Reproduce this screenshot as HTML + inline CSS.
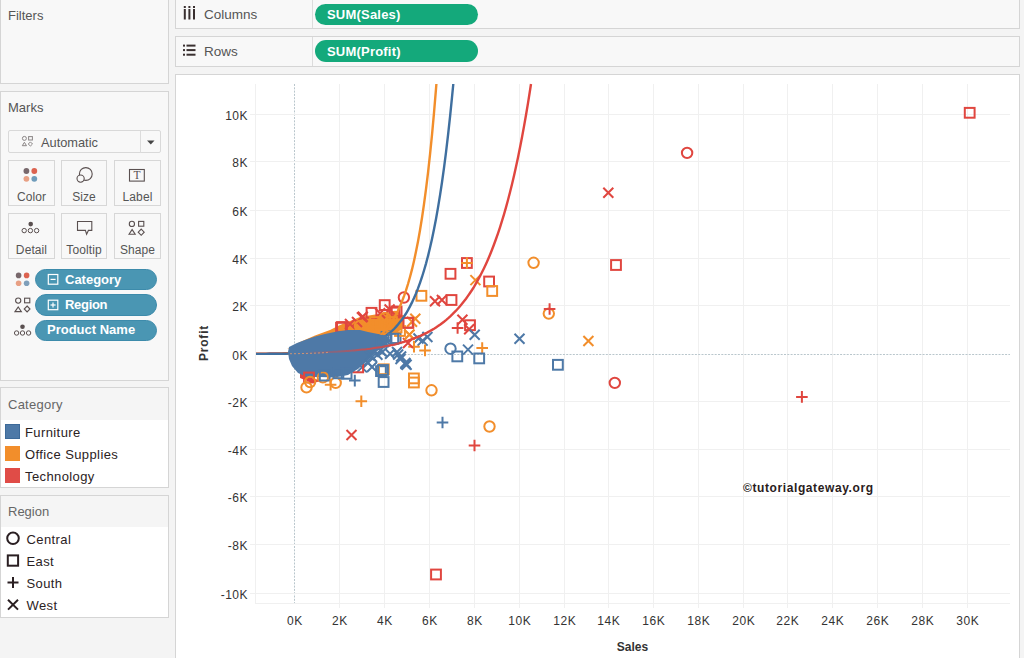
<!DOCTYPE html>
<html><head><meta charset="utf-8">
<style>
*{margin:0;padding:0;box-sizing:border-box}
html,body{width:1024px;height:658px;overflow:hidden;background:#f4f4f4;font-family:"Liberation Sans",sans-serif;position:relative}
.p{position:absolute;background:#f8f8f8;border:1px solid #d5d5d5}
.t{position:absolute;white-space:nowrap;line-height:15px}
.ax{font-family:"Liberation Sans",sans-serif;font-size:12px;fill:#333;letter-spacing:0.5px}
.at{font-family:"Liberation Sans",sans-serif;font-size:12px;font-weight:bold;fill:#333}
.wm{font-family:"Liberation Sans",sans-serif;font-size:12px;font-weight:bold;fill:#2a1c1c;letter-spacing:0.6px}
.pill{position:absolute;border-radius:11px;color:#fff;font-weight:bold;font-size:13px;white-space:nowrap;line-height:15px}
.btn{position:absolute;width:46px;height:46px;border:1px solid #d7d7d7;background:#f8f8f8}
.btn span{position:absolute;left:0;right:0;top:28.5px;text-align:center;font-size:12px;letter-spacing:0.1px;color:#555;line-height:15px}
.lg{font-size:13px;color:#2b2223;letter-spacing:0.4px}
</style></head><body>
<div class="p" style="left:0;top:-1px;width:169px;height:85px"></div>
<div class="t" style="left:8px;top:8px;font-size:13px;color:#555">Filters</div>
<div class="p" style="left:0;top:91px;width:169px;height:290px"></div>
<div class="t" style="left:8px;top:100px;font-size:13px;color:#555">Marks</div>
<div class="p" style="left:8px;top:130px;width:153px;height:23px;background:#f8f8f8;border-color:#d9d9d9;border-radius:2px"></div>
<div class="t" style="left:41px;top:134.5px;font-size:12.8px;color:#555">Automatic</div>
<div class="btn" style="left:8px;top:160px;width:47px"><span>Color</span></div>
<div class="btn" style="left:61px;top:160px"><span>Size</span></div>
<div class="btn" style="left:114px;top:160px;width:47px"><span>Label</span></div>
<div class="btn" style="left:8px;top:213px;width:47px"><span>Detail</span></div>
<div class="btn" style="left:61px;top:213px"><span>Tooltip</span></div>
<div class="btn" style="left:114px;top:213px;width:47px"><span>Shape</span></div>
<div class="pill" style="left:35px;top:269px;width:122px;height:21px;background:#4a96b3;border:1px solid #3d8bab;padding:1.5px 0 0 29px">Category</div>
<div class="pill" style="left:35px;top:294px;width:122px;height:22px;background:#4a96b3;border:1px solid #3d8bab;padding:1.5px 0 0 29px;letter-spacing:-0.3px">Region</div>
<div class="pill" style="left:35px;top:319.5px;width:122px;height:21px;background:#4a96b3;border:1px solid #3d8bab;padding:1.5px 0 0 11px">Product Name</div>

<div class="p" style="left:0;top:387px;width:169px;height:101px;background:#fff"></div>
<div style="position:absolute;left:1px;top:388px;width:167px;height:32px;background:#f5f5f5"></div>
<div class="t" style="left:8px;top:397px;font-size:13px;color:#666;letter-spacing:0.25px">Category</div>
<div style="position:absolute;left:5px;top:424px;width:15px;height:15px;background:#4e79a7;border:1px solid #3d6a99"></div>
<div style="position:absolute;left:5px;top:446px;width:15px;height:15px;background:#f28e2b"></div>
<div style="position:absolute;left:5px;top:468px;width:15px;height:15px;background:#e04c47"></div>
<div class="t lg" style="left:25px;top:425px">Furniture</div>
<div class="t lg" style="left:25px;top:447px">Office Supplies</div>
<div class="t lg" style="left:25px;top:469px">Technology</div>

<div class="p" style="left:0;top:495px;width:169px;height:123px;background:#fff"></div>
<div style="position:absolute;left:1px;top:496px;width:167px;height:31px;background:#f5f5f5"></div>
<div class="t" style="left:8px;top:504px;font-size:13px;color:#666">Region</div>
<div class="t lg" style="left:26.5px;top:532px">Central</div>
<div class="t lg" style="left:26.5px;top:554px">East</div>
<div class="t lg" style="left:26.5px;top:576px">South</div>
<div class="t lg" style="left:26.5px;top:598px">West</div>

<div class="p" style="left:175px;top:-1px;width:845px;height:30px"></div>
<div style="position:absolute;left:312px;top:0;width:1px;height:28px;background:#dcdcdc"></div>
<div class="t" style="left:204px;top:7px;font-size:13.5px;color:#555">Columns</div>
<div class="pill" style="left:315px;top:4px;width:163px;height:21px;background:#14a97b;padding:2.5px 0 0 12px;letter-spacing:0.2px">SUM(Sales)</div>
<div class="p" style="left:175px;top:36px;width:845px;height:31px"></div>
<div style="position:absolute;left:312px;top:37px;width:1px;height:29px;background:#dcdcdc"></div>
<div class="t" style="left:204px;top:44px;font-size:13.5px;color:#555">Rows</div>
<div class="pill" style="left:315px;top:40px;width:163px;height:22px;background:#14a97b;padding:3.5px 0 0 12px;letter-spacing:0.2px">SUM(Profit)</div>

<div class="p" style="left:175px;top:74px;width:845px;height:600px;background:#fff"></div>
<svg style="position:absolute;left:0;top:0" width="1024" height="658" viewBox="0 0 1024 658">
<line x1="294.5" y1="84" x2="294.5" y2="603" stroke="#b9c6cc" stroke-width="1" stroke-dasharray="2 1.3"/>
<line x1="339.5" y1="84" x2="339.5" y2="608" stroke="#f0f0f0" stroke-width="1"/>
<line x1="384.5" y1="84" x2="384.5" y2="608" stroke="#f0f0f0" stroke-width="1"/>
<line x1="429.5" y1="84" x2="429.5" y2="608" stroke="#f0f0f0" stroke-width="1"/>
<line x1="474.5" y1="84" x2="474.5" y2="608" stroke="#f0f0f0" stroke-width="1"/>
<line x1="519.5" y1="84" x2="519.5" y2="608" stroke="#f0f0f0" stroke-width="1"/>
<line x1="564.5" y1="84" x2="564.5" y2="608" stroke="#f0f0f0" stroke-width="1"/>
<line x1="608.5" y1="84" x2="608.5" y2="608" stroke="#f0f0f0" stroke-width="1"/>
<line x1="653.5" y1="84" x2="653.5" y2="608" stroke="#f0f0f0" stroke-width="1"/>
<line x1="698.5" y1="84" x2="698.5" y2="608" stroke="#f0f0f0" stroke-width="1"/>
<line x1="743.5" y1="84" x2="743.5" y2="608" stroke="#f0f0f0" stroke-width="1"/>
<line x1="787.5" y1="84" x2="787.5" y2="608" stroke="#f0f0f0" stroke-width="1"/>
<line x1="832.5" y1="84" x2="832.5" y2="608" stroke="#f0f0f0" stroke-width="1"/>
<line x1="877.5" y1="84" x2="877.5" y2="608" stroke="#f0f0f0" stroke-width="1"/>
<line x1="922.5" y1="84" x2="922.5" y2="608" stroke="#f0f0f0" stroke-width="1"/>
<line x1="967.5" y1="84" x2="967.5" y2="608" stroke="#f0f0f0" stroke-width="1"/>
<line x1="255.5" y1="84" x2="255.5" y2="603" stroke="#f0f0f0" stroke-width="1"/>
<line x1="250" y1="114.5" x2="1010" y2="114.5" stroke="#f0f0f0" stroke-width="1"/>
<line x1="250" y1="161.5" x2="1010" y2="161.5" stroke="#f0f0f0" stroke-width="1"/>
<line x1="250" y1="210.5" x2="1010" y2="210.5" stroke="#f0f0f0" stroke-width="1"/>
<line x1="250" y1="258.5" x2="1010" y2="258.5" stroke="#f0f0f0" stroke-width="1"/>
<line x1="250" y1="305.5" x2="1010" y2="305.5" stroke="#f0f0f0" stroke-width="1"/>
<line x1="256" y1="354.5" x2="1010" y2="354.5" stroke="#b9c6cc" stroke-width="1" stroke-dasharray="2 1.3"/>
<line x1="250" y1="401.5" x2="1010" y2="401.5" stroke="#f0f0f0" stroke-width="1"/>
<line x1="250" y1="449.5" x2="1010" y2="449.5" stroke="#f0f0f0" stroke-width="1"/>
<line x1="250" y1="496.5" x2="1010" y2="496.5" stroke="#f0f0f0" stroke-width="1"/>
<line x1="250" y1="544.5" x2="1010" y2="544.5" stroke="#f0f0f0" stroke-width="1"/>
<line x1="250" y1="593.5" x2="1010" y2="593.5" stroke="#f0f0f0" stroke-width="1"/>
<line x1="255" y1="603.5" x2="1010" y2="603.5" stroke="#f0f0f0" stroke-width="1"/>
<text x="248" y="120.0" text-anchor="end" class="ax">10K</text>
<text x="248" y="167.0" text-anchor="end" class="ax">8K</text>
<text x="248" y="216.0" text-anchor="end" class="ax">6K</text>
<text x="248" y="264.0" text-anchor="end" class="ax">4K</text>
<text x="248" y="311.0" text-anchor="end" class="ax">2K</text>
<text x="248" y="360.0" text-anchor="end" class="ax">0K</text>
<text x="248" y="407.0" text-anchor="end" class="ax">-2K</text>
<text x="248" y="455.0" text-anchor="end" class="ax">-4K</text>
<text x="248" y="502.0" text-anchor="end" class="ax">-6K</text>
<text x="248" y="550.0" text-anchor="end" class="ax">-8K</text>
<text x="248" y="599.0" text-anchor="end" class="ax">-10K</text>
<text x="294.8" y="625" text-anchor="middle" class="ax">0K</text>
<text x="339.8" y="625" text-anchor="middle" class="ax">2K</text>
<text x="384.8" y="625" text-anchor="middle" class="ax">4K</text>
<text x="429.8" y="625" text-anchor="middle" class="ax">6K</text>
<text x="474.8" y="625" text-anchor="middle" class="ax">8K</text>
<text x="519.8" y="625" text-anchor="middle" class="ax">10K</text>
<text x="564.8" y="625" text-anchor="middle" class="ax">12K</text>
<text x="608.8" y="625" text-anchor="middle" class="ax">14K</text>
<text x="653.8" y="625" text-anchor="middle" class="ax">16K</text>
<text x="698.8" y="625" text-anchor="middle" class="ax">18K</text>
<text x="743.8" y="625" text-anchor="middle" class="ax">20K</text>
<text x="787.8" y="625" text-anchor="middle" class="ax">22K</text>
<text x="832.8" y="625" text-anchor="middle" class="ax">24K</text>
<text x="877.8" y="625" text-anchor="middle" class="ax">26K</text>
<text x="922.8" y="625" text-anchor="middle" class="ax">28K</text>
<text x="967.8" y="625" text-anchor="middle" class="ax">30K</text>
<text x="632.5" y="651" text-anchor="middle" class="at">Sales</text>
<text transform="translate(208.3 343) rotate(-90)" text-anchor="middle" class="at" style="letter-spacing:0.8px">Profit</text>
<text x="743" y="491.7" class="wm">©tutorialgateway.org</text>
<polygon points="287,349 300,342 315,335.5 330,330 340,325 350,321 360,317 372,315 385,313 395,311 403,317 401,330 390,336 375,338 360,334 345,333 320,337 300,345" fill="#f28e2b"/><polygon points="300,372 312,378 322,381 312,383 300,378" fill="#e0463f"/>
<rect x="964.8" y="107.9" width="9.8" height="9.8" fill="none" stroke="#e0463f" stroke-width="2.0"/>
<circle cx="687.1" cy="152.9" r="5.2" fill="none" stroke="#e0463f" stroke-width="2.0"/>
<path d="M603.3 187.7L613.3 197.7M613.3 187.7L603.3 197.7" stroke="#e0463f" stroke-width="2.0"/>
<circle cx="533.6" cy="262.8" r="5.2" fill="none" stroke="#f28e2b" stroke-width="2.0"/>
<rect x="611.1" y="260.1" width="9.8" height="9.8" fill="none" stroke="#e0463f" stroke-width="2.0"/>
<circle cx="548.8" cy="313.6" r="5.2" fill="none" stroke="#f28e2b" stroke-width="2.0"/>
<path d="M543.8 309.0H555.4M549.6 303.2V314.8" stroke="#e0463f" stroke-width="2.0"/>
<path d="M514.5 333.8L524.5 343.8M524.5 333.8L514.5 343.8" stroke="#4e79a7" stroke-width="2.0"/>
<path d="M583.4 336.0L593.4 346.0M593.4 336.0L583.4 346.0" stroke="#f28e2b" stroke-width="2.0"/>
<rect x="553.0" y="359.9" width="9.8" height="9.8" fill="none" stroke="#4e79a7" stroke-width="2.0"/>
<circle cx="614.8" cy="382.9" r="5.2" fill="none" stroke="#e0463f" stroke-width="2.0"/>
<path d="M796.1 396.9H807.7M801.9 391.1V402.7" stroke="#e0463f" stroke-width="2.0"/>
<rect x="462.0" y="258.1" width="9.8" height="9.8" fill="none" stroke="#e0463f" stroke-width="2.0"/>
<path d="M461.1 263.0H472.7M466.9 257.2V268.8" stroke="#f28e2b" stroke-width="2.0"/>
<rect x="445.6" y="268.9" width="9.8" height="9.8" fill="none" stroke="#e0463f" stroke-width="2.0"/>
<path d="M470.4 275.1L480.4 285.1M480.4 275.1L470.4 285.1" stroke="#f28e2b" stroke-width="2.0"/>
<rect x="484.2" y="276.6" width="9.8" height="9.8" fill="none" stroke="#e0463f" stroke-width="2.0"/>
<rect x="487.3" y="286.1" width="9.8" height="9.8" fill="none" stroke="#f28e2b" stroke-width="2.0"/>
<circle cx="403.9" cy="297.5" r="5.2" fill="none" stroke="#e0463f" stroke-width="2.0"/>
<rect x="416.5" y="290.9" width="9.8" height="9.8" fill="none" stroke="#f28e2b" stroke-width="2.0"/>
<path d="M430.0 296.3L440.0 306.3M440.0 296.3L430.0 306.3" stroke="#e0463f" stroke-width="2.0"/>
<path d="M436.9 295.0L446.9 305.0M446.9 295.0L436.9 305.0" stroke="#e0463f" stroke-width="2.0"/>
<rect x="446.6" y="295.1" width="9.8" height="9.8" fill="none" stroke="#e0463f" stroke-width="2.0"/>
<path d="M410.3 313.8L420.3 323.8M420.3 313.8L410.3 323.8" stroke="#f28e2b" stroke-width="2.0"/>
<rect x="403.5" y="317.9" width="9.8" height="9.8" fill="none" stroke="#e0463f" stroke-width="2.0"/>
<path d="M457.4 314.8L467.4 324.8M467.4 314.8L457.4 324.8" stroke="#e0463f" stroke-width="2.0"/>
<rect x="465.1" y="320.3" width="9.8" height="9.8" fill="none" stroke="#e0463f" stroke-width="2.0"/>
<path d="M451.8 328.0H463.4M457.6 322.2V333.8" stroke="#e0463f" stroke-width="2.0"/>
<path d="M464.2 324.3L474.2 334.3M474.2 324.3L464.2 334.3" stroke="#e0463f" stroke-width="2.0"/>
<path d="M469.7 329.8L479.7 339.8M479.7 329.8L469.7 339.8" stroke="#4e79a7" stroke-width="2.0"/>
<path d="M476.4 348.0H488.0M482.2 342.2V353.8" stroke="#f28e2b" stroke-width="2.0"/>
<circle cx="450.5" cy="348.7" r="5.2" fill="none" stroke="#4e79a7" stroke-width="2.0"/>
<path d="M463.0 344.6L473.0 354.6M473.0 344.6L463.0 354.6" stroke="#4e79a7" stroke-width="2.0"/>
<rect x="452.4" y="351.5" width="9.8" height="9.8" fill="none" stroke="#4e79a7" stroke-width="2.0"/>
<rect x="474.3" y="353.5" width="9.8" height="9.8" fill="none" stroke="#4e79a7" stroke-width="2.0"/>
<path d="M422.4 332.0L432.4 342.0M432.4 332.0L422.4 342.0" stroke="#4e79a7" stroke-width="2.0"/>
<path d="M417.6 335.6L427.6 345.6M427.6 335.6L417.6 345.6" stroke="#4e79a7" stroke-width="2.0"/>
<path d="M413.5 333.5L423.5 343.5M423.5 333.5L413.5 343.5" stroke="#4e79a7" stroke-width="2.0"/>
<path d="M404.5 329.6L414.5 339.6M414.5 329.6L404.5 339.6" stroke="#f28e2b" stroke-width="2.0"/>
<path d="M408.2 346.7H419.8M414.0 340.9V352.5" stroke="#f28e2b" stroke-width="2.0"/>
<path d="M419.2 350.4H430.8M425.0 344.6V356.2" stroke="#f28e2b" stroke-width="2.0"/>
<path d="M403.0 338.0L413.0 348.0M413.0 338.0L403.0 348.0" stroke="#e0463f" stroke-width="2.0"/>
<path d="M396.1 351.5L406.1 361.5M406.1 351.5L396.1 361.5" stroke="#4e79a7" stroke-width="2.0"/>
<path d="M401.6 359.7L411.6 369.7M411.6 359.7L401.6 369.7" stroke="#4e79a7" stroke-width="2.0"/>
<path d="M385.1 348.8L395.1 358.8M395.1 348.8L385.1 358.8" stroke="#4e79a7" stroke-width="2.0"/>
<path d="M372.4 349.7L382.4 359.7M382.4 349.7L372.4 359.7" stroke="#4e79a7" stroke-width="2.0"/>
<path d="M363.2 357.9L373.2 367.9M373.2 357.9L363.2 367.9" stroke="#4e79a7" stroke-width="2.0"/>
<path d="M356.9 362.4L366.9 372.4M366.9 362.4L356.9 372.4" stroke="#4e79a7" stroke-width="2.0"/>
<rect x="353.3" y="362.5" width="9.8" height="9.8" fill="none" stroke="#e0463f" stroke-width="2.0"/>
<rect x="376.1" y="366.2" width="9.8" height="9.8" fill="none" stroke="#4e79a7" stroke-width="2.0"/>
<rect x="378.9" y="364.4" width="9.8" height="9.8" fill="none" stroke="#f28e2b" stroke-width="2.0"/>
<rect x="390.7" y="333.3" width="9.8" height="9.8" fill="none" stroke="#4e79a7" stroke-width="2.0"/>
<rect x="381.6" y="331.5" width="9.8" height="9.8" fill="none" stroke="#4e79a7" stroke-width="2.0"/>
<rect x="370.6" y="335.1" width="9.8" height="9.8" fill="none" stroke="#4e79a7" stroke-width="2.0"/>
<path d="M407.0 316.8L417.0 326.8M417.0 316.8L407.0 326.8" stroke="#f28e2b" stroke-width="2.0"/>
<rect x="409.0" y="373.5" width="9.8" height="9.8" fill="none" stroke="#f28e2b" stroke-width="2.0"/>
<rect x="409.0" y="377.6" width="9.8" height="9.8" fill="none" stroke="#f28e2b" stroke-width="2.0"/>
<circle cx="431.5" cy="390.3" r="5.2" fill="none" stroke="#f28e2b" stroke-width="2.0"/>
<rect x="378.7" y="377.1" width="9.8" height="9.8" fill="none" stroke="#4e79a7" stroke-width="2.0"/>
<path d="M436.7 422.5H448.3M442.5 416.7V428.3" stroke="#4e79a7" stroke-width="2.0"/>
<circle cx="489.5" cy="426.5" r="5.2" fill="none" stroke="#f28e2b" stroke-width="2.0"/>
<path d="M468.7 445.5H480.3M474.5 439.7V451.3" stroke="#e0463f" stroke-width="2.0"/>
<path d="M346.5 430.0L356.5 440.0M356.5 430.0L346.5 440.0" stroke="#e0463f" stroke-width="2.0"/>
<path d="M355.5 401.3H367.1M361.3 395.5V407.1" stroke="#f28e2b" stroke-width="2.0"/>
<rect x="431.1" y="569.6" width="9.8" height="9.8" fill="none" stroke="#e0463f" stroke-width="2.0"/>
<rect x="393.1" y="316.1" width="9.8" height="9.8" fill="none" stroke="#f28e2b" stroke-width="2.0"/>
<rect x="395.1" y="326.1" width="9.8" height="9.8" fill="none" stroke="#f28e2b" stroke-width="2.0"/>
<rect x="387.1" y="322.1" width="9.8" height="9.8" fill="none" stroke="#f28e2b" stroke-width="2.0"/>
<circle cx="395.0" cy="317.0" r="5.2" fill="none" stroke="#f28e2b" stroke-width="2.0"/>
<path d="M383.0 317.0L393.0 327.0M393.0 317.0L383.0 327.0" stroke="#f28e2b" stroke-width="2.0"/>
<rect x="375.1" y="320.1" width="9.8" height="9.8" fill="none" stroke="#f28e2b" stroke-width="2.0"/>
<rect x="336.1" y="322.8" width="9.8" height="9.8" fill="none" stroke="#e0463f" stroke-width="2.0"/>
<rect x="403.0" y="317.9" width="9.8" height="9.8" fill="none" stroke="#e0463f" stroke-width="2.0"/>
<path d="M384.6 304.5L394.6 314.5M394.6 304.5L384.6 314.5" stroke="#e0463f" stroke-width="2.0"/>
<path d="M357.8 311.8L367.8 321.8M367.8 311.8L357.8 321.8" stroke="#e0463f" stroke-width="2.0"/>
<rect x="389.6" y="307.6" width="9.8" height="9.8" fill="none" stroke="#e0463f" stroke-width="2.0"/>
<rect x="379.8" y="300.2" width="9.8" height="9.8" fill="none" stroke="#e0463f" stroke-width="2.0"/>
<rect x="366.6" y="307.9" width="9.8" height="9.8" fill="none" stroke="#e0463f" stroke-width="2.0"/>
<path d="M375.1 308.3L385.1 318.3M385.1 308.3L375.1 318.3" stroke="#e0463f" stroke-width="2.0"/>
<rect x="391.7" y="306.6" width="9.8" height="9.8" fill="none" stroke="#e0463f" stroke-width="2.0"/>
<path d="M356.9 312.4L366.9 322.4M366.9 312.4L356.9 322.4" stroke="#e0463f" stroke-width="2.0"/>
<path d="M352.0 317.0L362.0 327.0M362.0 317.0L352.0 327.0" stroke="#e0463f" stroke-width="2.0"/>
<rect x="391.7" y="322.5" width="9.8" height="9.8" fill="none" stroke="#f28e2b" stroke-width="2.0"/>
<path d="M404.3 329.7L414.3 339.7M414.3 329.7L404.3 339.7" stroke="#f28e2b" stroke-width="2.0"/>
<rect x="387.1" y="317.1" width="9.8" height="9.8" fill="none" stroke="#f28e2b" stroke-width="2.0"/>
<circle cx="385.0" cy="318.0" r="5.2" fill="none" stroke="#f28e2b" stroke-width="2.0"/>
<rect x="337.1" y="322.1" width="9.8" height="9.8" fill="none" stroke="#e0463f" stroke-width="2.0"/>
<path d="M345.0 319.0L355.0 329.0M355.0 319.0L345.0 329.0" stroke="#e0463f" stroke-width="2.0"/>
<circle cx="360.0" cy="326.0" r="5.2" fill="none" stroke="#f28e2b" stroke-width="2.0"/>
<rect x="370.1" y="317.1" width="9.8" height="9.8" fill="none" stroke="#f28e2b" stroke-width="2.0"/>
<path d="M363.0 321.0L373.0 331.0M373.0 321.0L363.0 331.0" stroke="#f28e2b" stroke-width="2.0"/>
<path d="M256.0 353.7 L258.0 353.7 L260.0 353.6 L262.0 353.6 L264.0 353.6 L266.0 353.6 L268.0 353.6 L270.0 353.5 L272.0 353.5 L274.0 353.5 L276.0 353.5 L278.0 353.4 L280.0 353.4 L282.0 353.4 L284.0 353.3 L286.0 353.3 L288.0 353.3 L290.0 353.2 L292.0 353.2 L294.0 353.2 L296.0 353.1 L298.0 353.1 L300.0 353.0 L302.0 353.0 L304.0 352.9 L306.0 352.9 L308.0 352.8 L310.0 352.8 L312.0 352.7 L314.0 352.6 L316.0 352.6 L318.0 352.5 L320.0 352.4 L322.0 352.4 L324.0 352.3 L326.0 352.2 L328.0 352.1 L330.0 352.0 L332.0 351.9 L334.0 351.8 L336.0 351.7 L338.0 351.6 L340.0 351.4 L342.0 351.3 L344.0 351.2 L346.0 351.0 L348.0 350.9 L350.0 350.7 L352.0 350.6 L354.0 350.4 L356.0 350.2 L358.0 350.0 L360.0 349.8 L362.0 349.6 L364.0 349.4 L366.0 349.2 L368.0 348.9 L370.0 348.7 L372.0 348.4 L374.0 348.1 L376.0 347.8 L378.0 347.5 L380.0 347.2 L382.0 346.9 L384.0 346.5 L386.0 346.1 L388.0 345.8 L390.0 345.3 L392.0 344.9 L394.0 344.5 L396.0 344.0 L398.0 343.5 L400.0 342.9 L402.0 342.4 L404.0 341.8 L406.0 341.2 L408.0 340.6 L410.0 339.9 L412.0 339.2 L414.0 338.4 L416.0 337.7 L418.0 336.9 L420.0 336.0 L422.0 335.1 L424.0 334.1 L426.0 333.2 L428.0 332.1 L430.0 331.0 L432.0 329.9 L434.0 328.7 L436.0 327.4 L438.0 326.1 L440.0 324.7 L442.0 323.2 L444.0 321.7 L446.0 320.1 L448.0 318.4 L450.0 316.6 L452.0 314.7 L454.0 312.7 L456.0 310.7 L458.0 308.5 L460.0 306.2 L462.0 303.8 L464.0 301.3 L466.0 298.7 L468.0 295.9 L470.0 293.0 L472.0 290.0 L474.0 286.8 L476.0 283.4 L478.0 279.9 L480.0 276.2 L482.0 272.3 L484.0 268.2 L486.0 263.9 L488.0 259.4 L490.0 254.7 L492.0 249.7 L494.0 244.5 L496.0 239.0 L498.0 233.3 L500.0 227.3 L502.0 220.9 L504.0 214.3 L506.0 207.3 L508.0 200.0 L510.0 192.3 L512.0 184.2 L514.0 175.7 L516.0 166.8 L518.0 157.4 L520.0 147.6 L522.0 137.2 L524.0 126.4 L526.0 115.0 L528.0 103.1 L530.0 90.5 L531.0 84.0" fill="none" stroke="#e0463f" stroke-width="2.4"/>
<path d="M256.0 353.9 L258.0 353.9 L260.0 353.9 L262.0 353.9 L264.0 353.9 L266.0 353.9 L268.0 353.9 L270.0 353.9 L272.0 353.9 L274.0 353.9 L276.0 353.9 L278.0 353.9 L280.0 353.8 L282.0 353.8 L284.0 353.8 L286.0 353.8 L288.0 353.8 L290.0 353.7 L292.0 353.7 L294.0 353.7 L296.0 353.7 L298.0 353.6 L300.0 353.6 L302.0 353.5 L304.0 353.5 L306.0 353.5 L308.0 353.4 L310.0 353.3 L312.0 353.3 L314.0 353.2 L316.0 353.1 L318.0 353.0 L320.0 352.9 L322.0 352.8 L324.0 352.7 L326.0 352.6 L328.0 352.4 L330.0 352.3 L332.0 352.1 L334.0 351.9 L336.0 351.7 L338.0 351.5 L340.0 351.2 L342.0 351.0 L344.0 350.7 L346.0 350.3 L348.0 350.0 L350.0 349.6 L352.0 349.1 L354.0 348.6 L356.0 348.1 L358.0 347.5 L360.0 346.9 L362.0 346.2 L364.0 345.4 L366.0 344.5 L368.0 343.6 L370.0 342.5 L372.0 341.4 L374.0 340.1 L376.0 338.7 L378.0 337.2 L380.0 335.5 L382.0 333.7 L384.0 331.7 L386.0 329.4 L388.0 327.0 L390.0 324.3 L392.0 321.3 L394.0 318.0 L396.0 314.5 L398.0 310.5 L400.0 306.2 L402.0 301.4 L404.0 296.1 L406.0 290.4 L408.0 284.0 L410.0 277.0 L412.0 269.4 L414.0 260.9 L416.0 251.6 L418.0 241.4 L420.0 230.2 L422.0 217.8 L424.0 204.2 L426.0 189.2 L428.0 172.8 L430.0 154.7 L432.0 134.8 L434.0 112.9 L436.0 88.9 L436.4 84.0" fill="none" stroke="#f28e2b" stroke-width="2.4"/>
<path d="M256.0 353.9 L258.0 353.9 L260.0 353.9 L262.0 353.9 L264.0 353.9 L266.0 353.9 L268.0 353.8 L270.0 353.8 L272.0 353.8 L274.0 353.8 L276.0 353.8 L278.0 353.8 L280.0 353.7 L282.0 353.7 L284.0 353.7 L286.0 353.7 L288.0 353.6 L290.0 353.6 L292.0 353.6 L294.0 353.5 L296.0 353.5 L298.0 353.5 L300.0 353.4 L302.0 353.4 L304.0 353.3 L306.0 353.3 L308.0 353.2 L310.0 353.1 L312.0 353.1 L314.0 353.0 L316.0 352.9 L318.0 352.8 L320.0 352.7 L322.0 352.6 L324.0 352.5 L326.0 352.4 L328.0 352.2 L330.0 352.1 L332.0 351.9 L334.0 351.7 L336.0 351.6 L338.0 351.4 L340.0 351.1 L342.0 350.9 L344.0 350.6 L346.0 350.4 L348.0 350.0 L350.0 349.7 L352.0 349.4 L354.0 349.0 L356.0 348.5 L358.0 348.1 L360.0 347.6 L362.0 347.1 L364.0 346.5 L366.0 345.9 L368.0 345.2 L370.0 344.4 L372.0 343.6 L374.0 342.8 L376.0 341.8 L378.0 340.8 L380.0 339.7 L382.0 338.5 L384.0 337.2 L386.0 335.8 L388.0 334.3 L390.0 332.7 L392.0 330.9 L394.0 329.0 L396.0 326.9 L398.0 324.6 L400.0 322.1 L402.0 319.5 L404.0 316.6 L406.0 313.5 L408.0 310.1 L410.0 306.4 L412.0 302.4 L414.0 298.1 L416.0 293.5 L418.0 288.4 L420.0 282.9 L422.0 277.0 L424.0 270.5 L426.0 263.6 L428.0 256.0 L430.0 247.8 L432.0 239.0 L434.0 229.3 L436.0 218.9 L438.0 207.6 L440.0 195.4 L442.0 182.2 L444.0 167.8 L446.0 152.3 L448.0 135.4 L450.0 117.1 L452.0 97.3 L453.3 84.0" fill="none" stroke="#3f6f9f" stroke-width="2.4"/>
<polygon points="288,352 289,347 297,343 305,340 315,336.5 325,334 337,331.5 348,330 360,330 368,332 378,334 388,337 391,341 384,346 376,352 368,360 358,369 348,375 335,377.5 320,377 307,377 298,373 292,366 289,359" fill="#4e79a7"/>
<path d="M365.1 350.7L375.1 360.7M375.1 350.7L365.1 360.7" stroke="#4e79a7" stroke-width="2.0"/>
<path d="M377.3 347.0L387.3 357.0M387.3 347.0L377.3 357.0" stroke="#4e79a7" stroke-width="2.0"/>
<path d="M367.0 352.0L377.0 362.0M377.0 352.0L367.0 362.0" stroke="#4e79a7" stroke-width="2.0"/>
<path d="M375.4 345.3L385.4 355.3M385.4 345.3L375.4 355.3" stroke="#4e79a7" stroke-width="2.0"/>
<path d="M392.0 347.0L402.0 357.0M402.0 347.0L392.0 357.0" stroke="#4e79a7" stroke-width="2.0"/>
<path d="M395.5 354.0L405.5 364.0M405.5 354.0L395.5 364.0" stroke="#4e79a7" stroke-width="2.0"/>
<path d="M400.5 359.0L410.5 369.0M410.5 359.0L400.5 369.0" stroke="#4e79a7" stroke-width="2.0"/>
<path d="M367.0 362.0L377.0 372.0M377.0 362.0L367.0 372.0" stroke="#4e79a7" stroke-width="2.0"/>
<path d="M379.0 337.0L389.0 347.0M389.0 337.0L379.0 347.0" stroke="#4e79a7" stroke-width="2.0"/>
<rect x="378.1" y="365.1" width="9.8" height="9.8" fill="none" stroke="#4e79a7" stroke-width="2.0"/>
<path d="M393.1 349.5L403.1 359.5M403.1 349.5L393.1 359.5" stroke="#4e79a7" stroke-width="2.0"/>
<path d="M400.4 358.0L410.4 368.0M410.4 358.0L400.4 368.0" stroke="#4e79a7" stroke-width="2.0"/>
<rect x="388.4" y="333.8" width="9.8" height="9.8" fill="none" stroke="#4e79a7" stroke-width="2.0"/>
<rect x="376.1" y="336.1" width="9.8" height="9.8" fill="none" stroke="#4e79a7" stroke-width="2.0"/>
<rect x="304.1" y="372.6" width="9.8" height="9.8" fill="none" stroke="#e0463f" stroke-width="2.0"/>
<circle cx="306.5" cy="387.4" r="5.2" fill="none" stroke="#f28e2b" stroke-width="2.0"/>
<circle cx="310.1" cy="382.0" r="5.2" fill="none" stroke="#f28e2b" stroke-width="2.0"/>
<circle cx="322.9" cy="377.4" r="5.2" fill="none" stroke="#f28e2b" stroke-width="2.0"/>
<rect x="319.8" y="370.7" width="9.8" height="9.8" fill="none" stroke="#4e79a7" stroke-width="2.0"/>
<path d="M324.8 384.7H336.4M330.6 378.9V390.5" stroke="#f28e2b" stroke-width="2.0"/>
<circle cx="335.7" cy="382.9" r="5.2" fill="none" stroke="#f28e2b" stroke-width="2.0"/>
<path d="M349.0 380.6H360.6M354.8 374.8V386.4" stroke="#4e79a7" stroke-width="2.0"/>
<rect x="341.7" y="368.9" width="9.8" height="9.8" fill="none" stroke="#4e79a7" stroke-width="2.0"/>
<rect x="333.5" y="368.4" width="9.8" height="9.8" fill="none" stroke="#4e79a7" stroke-width="2.0"/>
<defs><linearGradient id="rg" gradientUnits="userSpaceOnUse" x1="300" y1="0" x2="370" y2="0"><stop offset="0" stop-color="#e0463f" stop-opacity="0"/><stop offset="1" stop-color="#e0463f" stop-opacity="0.8"/></linearGradient></defs>
<path d="M300.0 353.0 L302.0 353.0 L304.0 352.9 L306.0 352.9 L308.0 352.8 L310.0 352.8 L312.0 352.7 L314.0 352.6 L316.0 352.6 L318.0 352.5 L320.0 352.4 L322.0 352.4 L324.0 352.3 L326.0 352.2 L328.0 352.1 L330.0 352.0 L332.0 351.9 L334.0 351.8 L336.0 351.7 L338.0 351.6 L340.0 351.4 L342.0 351.3 L344.0 351.2 L346.0 351.0 L348.0 350.9 L350.0 350.7 L352.0 350.6 L354.0 350.4 L356.0 350.2 L358.0 350.0 L360.0 349.8 L362.0 349.6 L364.0 349.4 L366.0 349.2 L368.0 348.9 L370.0 348.7 L372.0 348.4 L374.0 348.1 L376.0 347.8 L378.0 347.5 L380.0 347.2 L382.0 346.9 L384.0 346.5 L386.0 346.1 L388.0 345.8 L390.0 345.3 L392.0 344.9 L394.0 344.5 L396.0 344.0 L398.0 343.5 L400.0 342.9" fill="none" stroke="url(#rg)" stroke-width="2"/>
<path d="M290.0 353.7 L292.0 353.7 L294.0 353.7 L296.0 353.7 L298.0 353.6 L300.0 353.6 L302.0 353.5 L304.0 353.5 L306.0 353.5 L308.0 353.4 L310.0 353.3 L312.0 353.3 L314.0 353.2 L316.0 353.1 L318.0 353.0 L320.0 352.9 L322.0 352.8 L324.0 352.7 L326.0 352.6 L328.0 352.4 L330.0 352.3" fill="none" stroke="#e99a6a" stroke-width="1" stroke-dasharray="2 2" opacity="0.8"/>
<rect x="183.8" y="6" width="2" height="2" fill="#3a3030"/><rect x="183.8" y="9" width="2" height="10.5" fill="#3a3030"/>
<rect x="188.4" y="6" width="2" height="2" fill="#3a3030"/><rect x="188.4" y="9" width="2" height="10.5" fill="#3a3030"/>
<rect x="193.0" y="6" width="2" height="2" fill="#3a3030"/><rect x="193.0" y="9" width="2" height="10.5" fill="#3a3030"/>
<rect x="183" y="44.6" width="2" height="2" fill="#3a3030"/><rect x="186.5" y="44.6" width="9" height="2" fill="#3a3030"/>
<rect x="183" y="49.1" width="2" height="2" fill="#3a3030"/><rect x="186.5" y="49.1" width="9" height="2" fill="#3a3030"/>
<rect x="183" y="53.7" width="2" height="2" fill="#3a3030"/><rect x="186.5" y="53.7" width="9" height="2" fill="#3a3030"/>
<g fill="none" stroke="#8a8585" stroke-width="1"><circle cx="24.4" cy="138.4" r="2"/><rect x="28.6" y="136.6" width="3.8" height="3.4"/><path d="M22.3 145.7 L24.4 142.3 L26.5 145.7Z"/><path d="M30.4 141.9 L32.5 144 L30.4 146.1 L28.3 144Z"/></g>
<line x1="140.5" y1="131" x2="140.5" y2="153" stroke="#dcdcdc"/>
<path d="M147 140.5 L154.5 140.5 L150.75 144.6Z" fill="#444"/>
<circle cx="26.4" cy="171" r="2.9" fill="#78686c"/><circle cx="34.3" cy="171" r="2.9" fill="#dc6350"/><circle cx="26.4" cy="178.8" r="2.9" fill="#e8a084"/><circle cx="34.3" cy="178.8" r="2.9" fill="#6f9cbb"/>
<g fill="none" stroke="#5a5050" stroke-width="1.1"><circle cx="85.8" cy="174" r="6.4"/><circle cx="80.6" cy="178.6" r="3.6" fill="#f8f8f8"/></g>
<rect x="129.5" y="169.5" width="14.8" height="11.6" fill="none" stroke="#5a5050" stroke-width="1.1"/><text x="136.9" y="179" text-anchor="middle" style="font:11.5px 'Liberation Serif',serif;fill:#5a5050">T</text>
<circle cx="30.7" cy="224.1" r="2.3" fill="#5a5050"/><g fill="none" stroke="#5a5050" stroke-width="1"><circle cx="24.2" cy="230.6" r="2.2"/><circle cx="30.4" cy="230.6" r="2.2"/><circle cx="36.6" cy="230.6" r="2.2"/></g>
<path d="M77.5 221.5 H91.8 V230.4 H88.4 L86.6 234.2 L85.4 230.4 H77.5Z" fill="none" stroke="#5a5050" stroke-width="1.1"/>
<g fill="none" stroke="#5a5050" stroke-width="1.1"><circle cx="131.9" cy="223.9" r="2.6"/><rect x="138.6" y="221.4" width="5.2" height="4.8"/><path d="M129 234.3 L132.1 229.6 L135.2 234.3Z"/><path d="M141.2 229.1 L144.2 232.2 L141.2 235.3 L138.2 232.2Z"/></g>
<circle cx="18.6" cy="275.4" r="2.8" fill="#78686c"/><circle cx="26.6" cy="275.4" r="2.8" fill="#dc6350"/><circle cx="18.6" cy="283.2" r="2.8" fill="#e8a084"/><circle cx="26.6" cy="283.2" r="2.8" fill="#7f9fba"/>
<g fill="none" stroke="#5a5050" stroke-width="1.1"><circle cx="18.2" cy="300.6" r="2.6"/><rect x="24.6" y="298.2" width="5.2" height="4.6"/><path d="M15 311.6 L18.2 306.9 L21.4 311.6Z"/><path d="M27.1 306 L30 309 L27.1 312 L24.2 309Z"/></g>
<circle cx="22.5" cy="326.7" r="2.3" fill="#5a5050"/><g fill="none" stroke="#5a5050" stroke-width="1"><circle cx="16.6" cy="333" r="2.2"/><circle cx="22.5" cy="333" r="2.2"/><circle cx="28.6" cy="333" r="2.2"/></g>
<rect x="48.3" y="274.5" width="9.5" height="9.7" fill="none" stroke="#fff" stroke-width="1.2"/><line x1="50.5" y1="279.4" x2="55.6" y2="279.4" stroke="#fff" stroke-width="1.2"/>
<rect x="48.3" y="300.2" width="9.5" height="9.5" fill="none" stroke="#fff" stroke-width="1.2"/><line x1="50.5" y1="305" x2="55.6" y2="305" stroke="#fff" stroke-width="1.2"/><line x1="53" y1="302.4" x2="53" y2="307.6" stroke="#fff" stroke-width="1.2"/>
<g fill="none" stroke="#2a1f22" stroke-width="2"><circle cx="13" cy="538.3" r="5.8"/><rect x="7.8" y="555.4" width="10.3" height="10.3"/><path d="M7.5 582.6 H18.5 M13 577.1 V588.1"/><path d="M8 599.8 L18 609.6 M18 599.8 L8 609.6"/></g>
</svg>
</body></html>
